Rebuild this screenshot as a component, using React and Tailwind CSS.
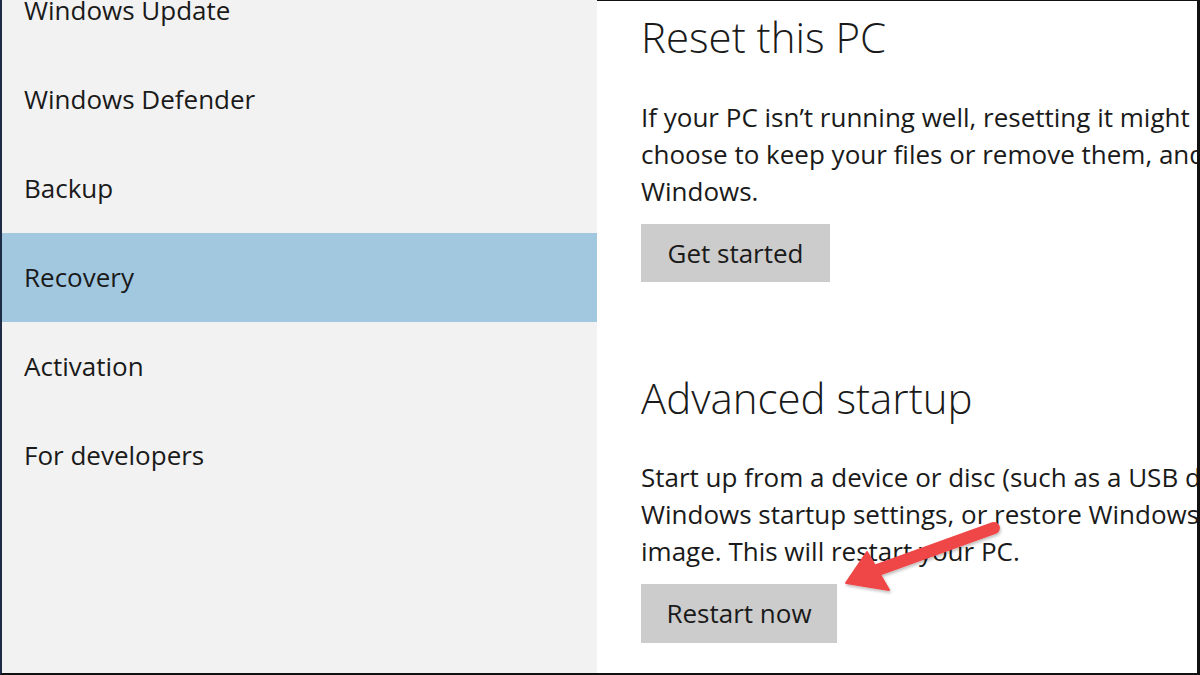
import React from "react";

const navItems = [
  "Windows Update",
  "Windows Defender",
  "Backup",
  "Recovery",
  "Activation",
  "For developers",
];

const Arrow = () => (
  <svg
    className="absolute left-[830px] top-[505px] pointer-events-none"
    width="190"
    height="100"
    viewBox="830 505 190 100"
  >
    <defs>
      <filter id="shadow" x="-20%" y="-20%" width="140%" height="140%">
        <feDropShadow dx="1" dy="2" stdDeviation="1.5" floodColor="#000" floodOpacity="0.25" />
      </filter>
    </defs>
    <g filter="url(#shadow)" fill="#ef4646" stroke="#ef4646">
      <line x1="994" y1="528" x2="872" y2="572" strokeWidth="12" strokeLinecap="round" />
      <polygon points="846,583 867,552 889,590" strokeWidth="2" strokeLinejoin="round" />
    </g>
  </svg>
);

const Para = ({ lines }) => (
  <div className="text-[26px] leading-[37px] text-[#1a1a1a]">
    {lines.map((l) => (
      <div key={l} className="whitespace-nowrap">{l}</div>
    ))}
  </div>
);

export default function App() {
  return (
    <div
      className="relative w-[1200px] h-[675px] flex overflow-hidden bg-white"
      style={{ fontFamily: '"Open Sans", "Noto Sans", sans-serif' }}
    >
      {/* sidebar */}
      <div className="w-[597px] h-full bg-[#f2f2f2] border-l-2 border-[#1d2b45] border-b-2 border-b-[#111] overflow-hidden">
        <div className="-mt-[34px]">
          {navItems.map((item) => (
            <div
              key={item}
              className={`h-[89px] flex items-center pl-[22px] text-[26px] text-[#1a1a1a] whitespace-nowrap ${
                item === "Recovery" ? "bg-[#a2c8e0]" : ""
              }`}
            >
              {item}
            </div>
          ))}
        </div>
      </div>

      {/* content */}
      <div className="flex-1 h-full border-t border-t-[#111] border-r-[3px] border-r-[#111] border-b-2 border-b-[#111] overflow-hidden pl-[44px]">
        <h2 className="mt-[6px] text-[42px] font-light leading-[60px] text-[#1a1a1a] whitespace-nowrap">
          Reset this PC
        </h2>
        <div className="mt-[32px]">
          <Para
            lines={[
              "If your PC isn\u2019t running well, resetting it might help. Resetting lets you",
              "choose to keep your files or remove them, and then reinstalls",
              "Windows.",
            ]}
          />
        </div>
        <button className="mt-[14px] w-[189px] h-[58px] bg-[#cccccc] text-[26px] text-[#1a1a1a]">
          Get started
        </button>

        <h2 className="mt-[86px] text-[42px] font-light leading-[60px] text-[#1a1a1a] whitespace-nowrap">
          Advanced startup
        </h2>
        <div className="mt-[31px]">
          <Para
            lines={[
              "Start up from a device or disc (such as a USB drive or DVD), change",
              "Windows startup settings, or restore Windows from a system",
              "image. This will restart your PC.",
            ]}
          />
        </div>
        <button className="mt-[14px] w-[196px] h-[59px] bg-[#cccccc] text-[26px] text-[#1a1a1a]">
          Restart now
        </button>
      </div>

      <Arrow />
    </div>
  );
}
